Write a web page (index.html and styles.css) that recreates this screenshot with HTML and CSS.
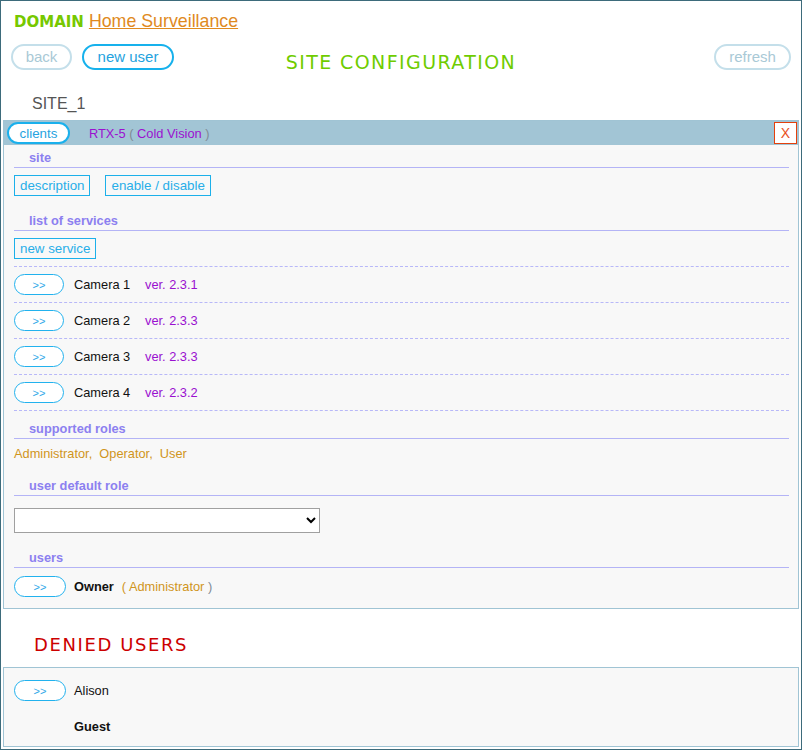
FILE: index.html
```html
<!DOCTYPE html>
<html>
<head>
<meta charset="utf-8">
<title>Site configuration</title>
<link rel="stylesheet" href="styles.css">
</head>
<body>
<div class="frame">
  <div class="domain"><span class="domain-label">DOMAIN</span><a class="domain-link" href="#">Home Surveillance</a></div>
  <div class="toolbar">
    <div class="toolbar-left">
      <button class="pill pill-muted back">back</button>
      <button class="pill pill-active new-user">new user</button>
    </div>
    <div class="title">SITE CONFIGURATION</div>
    <div class="toolbar-right"><button class="pill pill-muted refresh">refresh</button></div>
  </div>
  <div class="site-name">SITE_1</div>
  <section class="panel site-panel">
    <div class="panel-head">
      <button class="chip">clients</button>
      <span class="device">RTX-5 <span class="paren">(</span> Cold Vision <span class="paren">)</span></span>
      <button class="close">X</button>
    </div>
    <div class="panel-body">
      <div class="heading first">site</div>
      <div class="btn-row">
        <button class="sq">description</button>
        <button class="sq">enable / disable</button>
      </div>
      <div class="heading">list of services</div>
      <div class="btn-row"><button class="sq">new service</button></div>
      <ul class="services">
        <li class="service"><button class="go">&gt;&gt;</button><span class="svc-name">Camera 1</span><span class="ver">ver. 2.3.1</span></li>
        <li class="service"><button class="go">&gt;&gt;</button><span class="svc-name">Camera 2</span><span class="ver">ver. 2.3.3</span></li>
        <li class="service"><button class="go">&gt;&gt;</button><span class="svc-name">Camera 3</span><span class="ver">ver. 2.3.3</span></li>
        <li class="service"><button class="go">&gt;&gt;</button><span class="svc-name">Camera 4</span><span class="ver">ver. 2.3.2</span></li>
      </ul>
      <div class="heading roles-h">supported roles</div>
      <div class="roles">Administrator,&nbsp; Operator,&nbsp; User</div>
      <div class="heading default-h">user default role</div>
      <select class="role-select"><option></option></select>
      <div class="heading">users</div>
      <div class="user-row"><button class="go wide">&gt;&gt;</button><span class="user-name">Owner</span><span class="user-role">( Administrator <span class="paren">)</span></span></div>
    </div>
  </section>
  <h2 class="denied-title">DENIED USERS</h2>
  <section class="panel denied-panel">
    <div class="user-row"><button class="go wide">&gt;&gt;</button><span class="plain-name">Alison</span></div>
    <div class="user-row guest"><span class="user-name">Guest</span></div>
  </section>
</div>
</body>
</html>
```
FILE: styles.css
```css
* { box-sizing: border-box; }
html, body { margin: 0; padding: 0; background: #fff; }
body { font-family: "Liberation Sans", Arial, sans-serif; color: #111; }

.frame {
  width: 802px;
  height: 750px;
  border: 1px solid #3d6b7b;
  overflow: hidden;
}

.domain {
  height: 43px;
  padding: 10px 0 0 13px;
  line-height: 20px;
}
.domain-label {
  font-family: "DejaVu Sans", Verdana, sans-serif;
  font-weight: bold;
  font-size: 15px;
  color: #76c800;
  margin-right: 5px;
}
.domain-link {
  font-size: 17.8px;
  color: #e08a1e;
  text-decoration: underline;
}

.toolbar {
  display: grid;
  grid-template-columns: 1fr auto 1fr;
  height: 30px;
  padding: 0 10px;
}
.toolbar-left { display: flex; gap: 10px; align-items: flex-start; }
.toolbar-right { display: flex; justify-content: flex-end; align-items: flex-start; }
.title {
  margin-top: 6px;
  line-height: 24px;
  font-family: "DejaVu Sans", Verdana, sans-serif;
  font-size: 19px;
  letter-spacing: 1.4px;
  color: #6fcc00;
}

.pill {
  height: 26px;
  border: 2px solid;
  border-radius: 13px;
  background: #fff;
  font-family: "Liberation Sans", Arial, sans-serif;
  font-size: 15px;
  padding: 0 0 1px;
}
.pill-muted { border-color: #c4dfea; color: #a9c9d6; }
.pill-active { border-color: #16b1ec; color: #1fa3de; }
.back { width: 61px; }
.new-user { width: 92px; }
.refresh { width: 77px; }

.site-name {
  margin: 20px 0 0 31px;
  font-size: 16px;
  line-height: 20px;
  color: #555;
}

.panel {
  margin: 6px 2px 0;
  border: 1px solid #a0c4d4;
  background: #f8f8f8;
}

.panel-head {
  height: 24px;
  background: #a2c5d5;
  display: flex;
  align-items: center;
  padding: 0 1px 0 3px;
}
.chip {
  width: 63px;
  height: 22px;
  border: 2px solid #1ab0ec;
  border-radius: 11px;
  background: #fff;
  color: #27a3e0;
  font-family: "Liberation Sans", Arial, sans-serif;
  font-size: 13.33px;
  padding: 0;
}
.device {
  margin-left: 19px;
  font-size: 12.8px;
  color: #9b10d0;
}
.paren { color: #7f8a94; }
.close {
  margin-left: auto;
  width: 23px;
  height: 22px;
  border: 1px solid #e4400c;
  background: #fff;
  color: #e8501e;
  font-family: "Liberation Sans", Arial, sans-serif;
  font-size: 14px;
  padding: 0;
}

.panel-body { padding: 4px 9px 11px 10px; }

.heading {
  margin-top: 16px;
  padding: 1px 0 1px 15px;
  line-height: 16px;
  font-size: 12.8px;
  font-weight: bold;
  color: #8c80f0;
  border-bottom: 1px solid #b4b4f6;
}
.heading.first { margin-top: 0; }
.heading.roles-h { margin-top: 9px; }
.heading.default-h { margin-top: 15px; }

.btn-row { display: flex; gap: 15px; margin-top: 7px; }
.sq {
  height: 21px;
  border: 1px solid #1cb0ea;
  background: transparent;
  color: #28aee8;
  font-family: "Liberation Sans", Arial, sans-serif;
  font-size: 13.33px;
  padding: 0 5px;
}

.services {
  list-style: none;
  margin: 7px 0 0;
  padding: 0;
  border-top: 1px dashed #b8b8f8;
}
.service {
  height: 36px;
  border-bottom: 1px dashed #b8b8f8;
  display: flex;
  align-items: center;
}
.go {
  width: 50px;
  height: 21px;
  border: 1px solid #22b2ee;
  border-radius: 11px;
  background: #fff;
  color: #30a8e8;
  font-family: "Liberation Sans", Arial, sans-serif;
  font-size: 11px;
  padding: 0;
  margin-right: 10px;
  flex: none;
}
.go.wide { width: 52px; margin-right: 8px; }
.svc-name { width: 71px; font-size: 12.8px; color: #111; }
.ver { font-size: 12.8px; color: #9a10d0; }

.roles {
  margin-top: 7px;
  line-height: 16px;
  font-size: 12.8px;
  color: #d0951c;
}

.role-select {
  display: block;
  margin-top: 12px;
  width: 306px;
  height: 25px;
  border: 1px solid #a0a0a0;
  background: #fff;
}

.user-row {
  display: flex;
  align-items: center;
  height: 21px;
  margin-top: 8px;
}
.user-name { font-size: 12.8px; font-weight: bold; color: #111; }
.user-role { margin-left: 8px; font-size: 12.8px; color: #d0951c; }
.plain-name { font-size: 12.8px; color: #111; }

.denied-title {
  margin: 24px 0 10px 33px;
  font-family: "DejaVu Sans", Verdana, sans-serif;
  font-size: 18px;
  font-weight: normal;
  letter-spacing: 1.6px;
  line-height: 24px;
  color: #cc0000;
}

.denied-panel { padding: 12px 10px 9px; }
.denied-panel .user-row:first-child { margin-top: 0; }
.denied-panel .guest { margin-top: 15px; padding-left: 60px; }
```
